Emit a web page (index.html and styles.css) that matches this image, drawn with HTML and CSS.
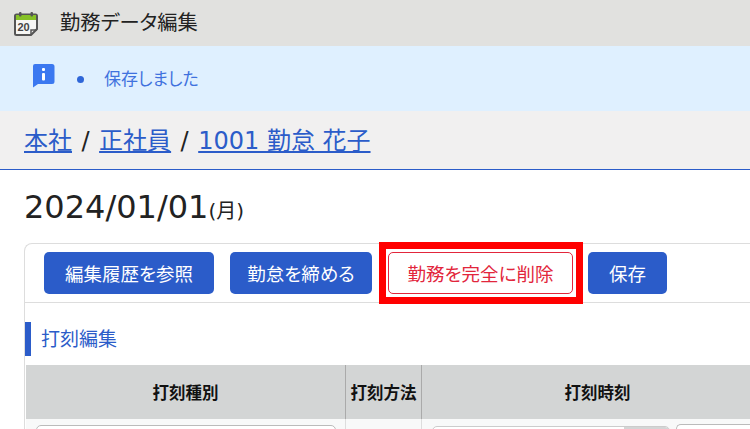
FILE: index.html
```html
<!DOCTYPE html>
<html lang="ja">
<head>
<meta charset="utf-8">
<title>勤務データ編集</title>
<link rel="stylesheet" href="styles.css">
</head>
<body>
<header class="titlebar">
  <svg class="cal" width="26" height="26" viewBox="0 0 26 26">
    <path d="M3.500 3.500h19a1.500 1.500 0 0 1 1.500 1.500v13l-6 6H3.500A1.500 1.500 0 0 1 2 22.500V5a1.500 1.500 0 0 1 1.500-1.500z" fill="#f6f6f4" stroke="#555" stroke-width="2"/>
    <rect x="3" y="4" width="20" height="5" fill="#86c127"/>
    <rect x="6" y="1" width="2.500" height="4.500" rx="1" fill="#555"/>
    <rect x="17.500" y="1" width="2.500" height="4.500" rx="1" fill="#555"/>
    <path d="M18 24v-5h6" fill="none" stroke="#555" stroke-width="1.500"/>
    <text x="4.500" y="20" class="caltext">20</text>
  </svg>
  <span class="titletext">勤務データ編集</span>
</header>
<section class="notice">
  <svg class="info" width="23" height="25" viewBox="0 0 23 25">
    <path d="M3 1h17a2.500 2.500 0 0 1 2.500 2.500v15a2.500 2.500 0 0 1-2.500 2.500H6l-5 3.500V3a2 2 0 0 1 2-2z" fill="#3b78f0"/>
    <rect x="10" y="5" width="3" height="3" rx="1" fill="#fff"/>
    <rect x="10" y="10" width="3" height="7.500" rx="1" fill="#fff"/>
  </svg>
  <span class="dot"></span>
  <span class="noticetext">保存しました</span>
</section>
<nav class="crumbs">
  <a href="#">本社</a><span class="sep">/</span><a href="#">正社員</a><span class="sep">/</span><a href="#">1001 勤怠 花子</a>
</nav>
<main class="content">
  <h1 class="date">2024/01/01<small>(月)</small></h1>
  <section class="card">
    <div class="toolbar">
      <button class="btn w-history">編集履歴を参照</button>
      <button class="btn w-close">勤怠を締める</button>
      <span class="highlight"><button class="btn danger">勤務を完全に削除</button></span>
      <button class="btn w-save">保存</button>
    </div>
    <h2 class="section-title">打刻編集</h2>
    <div class="table">
      <div class="head">
        <div class="th c1">打刻種別</div>
        <div class="th c2">打刻方法</div>
        <div class="th c3">打刻時刻</div>
      </div>
      <div class="row">
        <div class="td c1"><span class="select"></span></div>
        <div class="td c2"></div>
        <div class="td c3">
          <span class="dateinput"><span class="datebtn"></span></span>
          <span class="timeinput"></span>
        </div>
      </div>
    </div>
  </section>
</main>
</body>
</html>
```
FILE: styles.css
```css
* { box-sizing: border-box; }
html, body { margin: 0; height: 429px; overflow: hidden; background: #fff; }
body { font-family: "DejaVu Sans", "Noto Sans CJK JP", sans-serif; font-feature-settings: "palt"; color: #222; }
.titlebar { height: 46px; background: #e1e1df; display: flex; align-items: center; padding-left: 13px; }
.cal { display: block; margin: 2px 21px 0 0; flex: none; }
.caltext { font: bold 11px "Liberation Sans", sans-serif; fill: #444; }
.titletext { font-size: 20.300px; line-height: 26px; color: #222; }
.notice { height: 65px; background: #dff0ff; display: flex; align-items: flex-start; padding-left: 32px; }
.info { margin-top: 17px; flex: none; }
.dot { width: 7px; height: 7px; border-radius: 50%; background: #2f66d8; margin: 30px 0 0 22px; flex: none; }
.noticetext { margin: 21px 0 0 20px; font-size: 17px; line-height: 24px; color: #3f72de; }
.crumbs { height: 59px; background: #f1f0f0; border-bottom: 1px solid #2b5cc9; padding: 14px 0 0 24px; font-size: 24px; line-height: 32px; white-space: nowrap; }
.crumbs a { color: #2b5cc9; text-decoration: underline; }
.sep { margin: 0 9.500px; color: #222; }
.content { height: 259px; overflow: hidden; padding-left: 24px; }
.date { margin: 18px 0 0; font-size: 32px; font-weight: normal; line-height: 38px; color: #222; white-space: nowrap; }
.date small { font-size: 20px; }
.card { margin-top: 13px; width: 760px; border: 1px solid #ddd; border-right: 0; border-bottom: 0; border-top-left-radius: 8px; }
.toolbar { height: 59px; border-bottom: 1px solid #ddd; display: flex; align-items: flex-start; padding: 8px 0 0 19px; }
.btn { height: 42px; border: 0; border-radius: 5px; background: #2b5cc9; color: #fff; font: inherit; font-size: 18.500px; padding: 0; white-space: nowrap; flex: none; }
.w-history { width: 170px; margin-right: 16px; }
.w-close { width: 142px; margin-right: 7px; }
.w-save { width: 79px; margin-left: 5px; }
.highlight { display: block; flex: none; width: 204px; height: 62px; margin-top: -10px; border: 7px solid #f00; background: #fff; padding: 3px 3px 3px 2px; }
.highlight .danger { display: block; width: 185px; background: #fff; color: #e2263c; border: 1px solid #e2263c; }
.section-title { margin: 19px 0 0; height: 34px; border-left: 6px solid #2b5cc9; padding-left: 10px; font-size: 19px; font-weight: normal; line-height: 34px; color: #2b5cc9; }
.table { margin: 9px 0 0 1px; }
.head, .row { display: flex; }
.head { height: 54px; background: #d3d5d5; }
.th { font-size: 16.500px; font-weight: bold; color: #111; display: flex; align-items: center; justify-content: center; }
.c1 { width: 320px; border-right: 1px solid #aaa; flex: none; }
.c2 { width: 76px; border-right: 1px solid #aaa; flex: none; }
.c3 { flex: none; width: 351px; }
.row { height: 40px; }
.td { background: #f8f9f9; }
.td.c1 { border-right-color: #ddd; padding: 6px 0 0 10px; }
.td.c2 { border-right-color: #ddd; }
.td.c3 { display: flex; gap: 6px; padding: 7px 0 0 10px; }
.select { display: block; width: 300px; height: 30px; border: 1px solid #bbb; border-radius: 5px; background: #fff; }
.dateinput { display: block; flex: none; width: 238px; height: 30px; border: 1px solid #ccc; border-radius: 5px; background: #fff; position: relative; overflow: hidden; }
.datebtn { position: absolute; right: 0; top: 0; width: 45px; height: 100%; background: #d3d5d5; }
.timeinput { display: block; flex: none; width: 80px; height: 30px; margin-top: -2px; border: 1px solid #bbb; border-right: 0; border-radius: 5px 0 0 5px; background: #fff; }
```
